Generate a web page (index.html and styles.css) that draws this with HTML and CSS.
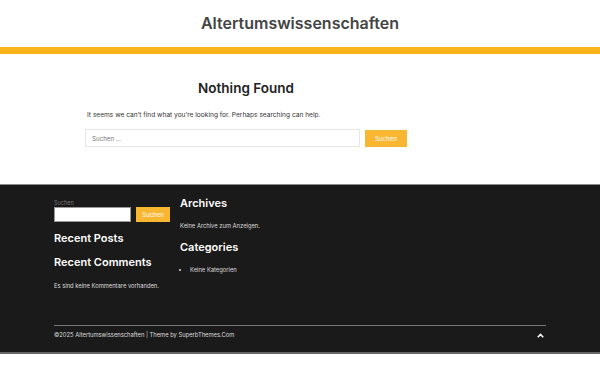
FILE: index.html
```html
<!doctype html>
<html lang="de">
  <head>
    <meta charset="UTF-8" />
    <meta name="viewport" content="width=device-width, initial-scale=1.0" />
    <title>Nothing Found – Altertumswissenschaften</title>
    <link rel="stylesheet" href="styles.css">
  </head>
  <body>
    <header class="site-header">
      <h1 class="site-title">Altertumswissenschaften</h1>
    </header>
    <div class="header-bar"></div>

    <main class="content">
      <h2 class="page-title">Nothing Found</h2>
      <p class="page-text">It seems we can’t find what you’re looking for. Perhaps searching can help.</p>
      <form class="search-form">
        <input class="search-field" type="search" placeholder="Suchen …" />
        <button class="search-submit" type="button">Suchen</button>
      </form>
    </main>

    <footer class="site-footer">
      <div class="footer-widgets">
        <div class="widget-col">
          <div class="widget">
            <label class="widget-label">Suchen</label>
            <div class="footer-search">
              <input class="footer-field" type="search" />
              <button class="footer-submit" type="button">Suchen</button>
            </div>
          </div>
          <h3 class="widget-title">Recent Posts</h3>
          <h3 class="widget-title">Recent Comments</h3>
          <p class="widget-text">Es sind keine Kommentare vorhanden.</p>
        </div>
        <div class="widget-col">
          <h3 class="widget-title">Archives</h3>
          <p class="widget-text">Keine Archive zum Anzeigen.</p>
          <h3 class="widget-title">Categories</h3>
          <ul class="widget-list">
            <li>Keine Kategorien</li>
          </ul>
        </div>
      </div>
      <div class="footer-bottom">
        <span class="copyright">©2025 Altertumswissenschaften | Theme by SuperbThemes.Com</span>
        <span class="to-top">
          <svg width="7" height="5" viewBox="0 0 7 5"><path d="M0.8 4.2 L3.5 1.4 L6.2 4.2" fill="none" stroke="#fff" stroke-width="1.6"/></svg>
        </span>
      </div>
    </footer>
  </body>
</html>
```

FILE: styles.css
```css
    * {
      box-sizing: border-box;
    }
    body {
      margin: 0;
      font-family: Inter, "Noto Sans", sans-serif;
      color: #333;
      background: #fff;
    }
    .site-header {
      height: 46px;
      display: flex;
      align-items: center;
      justify-content: center;
    }
    .site-title {
      margin: 0;
      font-size: 16px;
      font-weight: 600;
      color: #444;
    }
    .header-bar {
      height: 7px;
      margin-top: 1px;
      background: #f8b418;
    }

    .content {
      width: 322px;
      margin-left: 85px;
      padding: 25px 0 37px;
    }
    .page-title {
      margin: 0;
      text-align: center;
      font-size: 13.5px;
      font-weight: 600;
      color: #222;
      line-height: 18px;
    }
    .page-text {
      margin: 14px 0 0 2px;
      font-size: 6.6px;
      color: #333;
      line-height: 9px;
    }
    .search-form {
      display: flex;
      gap: 5px;
      margin-top: 9px;
    }
    .search-field {
      flex: 1;
      height: 18px;
      border: 1px solid #e6e6e6;
      padding: 0 6px;
      font-family: inherit;
      font-size: 6.2px;
      outline: none;
    }
    .search-field::placeholder {
      color: #777;
    }
    .search-submit {
      width: 42px;
      height: 17px;
      margin-top: 1px;
      border: none;
      background: #f9b630;
      color: #fff;
      font-family: inherit;
      font-size: 6.2px;
    }

    .site-footer {
      background: #1a1a1a;
      border-top: 1px solid #888;
      border-bottom: 2px solid #666;
      padding: 11px 54px 0;
      height: 170px;
      color: #fff;
    }
    .footer-widgets {
      display: flex;
      gap: 10px;
      height: 129px;
    }
    .widget-col {
      width: 116px;
    }
    .widget-col + .widget-col {
      width: 200px;
    }
    .widget {
      padding-top: 3px;
    }
    .widget-label {
      display: block;
      font-size: 5.5px;
      color: #777;
      line-height: 8px;
    }
    .footer-search {
      display: flex;
      gap: 5px;
    }
    .footer-field {
      width: 77px;
      height: 15px;
      border: 1px solid #999;
      background: #fff;
      outline: none;
    }
    .footer-submit {
      width: 34px;
      height: 15px;
      border: none;
      background: #f9b630;
      color: #fff;
      font-family: inherit;
      font-size: 6px;
      padding: 0;
    }
    .widget-title {
      margin: 9px 0 0;
      font-size: 11px;
      font-weight: 600;
      line-height: 15px;
      color: #fff;
    }
    .widget-text {
      margin: 12px 0 0;
      font-size: 5.8px;
      line-height: 8px;
      color: #ddd;
    }
    .widget-col + .widget-col .widget-title {
      margin-top: 0;
    }
    .widget-col + .widget-col .widget-text {
      margin-top: 11px;
      margin-bottom: 10px;
    }
    .widget-list {
      margin: 11px 0 0;
      padding-left: 10px;
      font-size: 5.8px;
      line-height: 8px;
      color: #ddd;
    }
    .footer-bottom {
      border-top: 1px solid #777;
      display: flex;
      justify-content: space-between;
      align-items: center;
      padding: 4px 0 0;
    }
    .copyright {
      font-size: 5.8px;
      color: #ddd;
      line-height: 10px;
    }
    .to-top {
      display: flex;
      margin-right: 2px;
    }
```
